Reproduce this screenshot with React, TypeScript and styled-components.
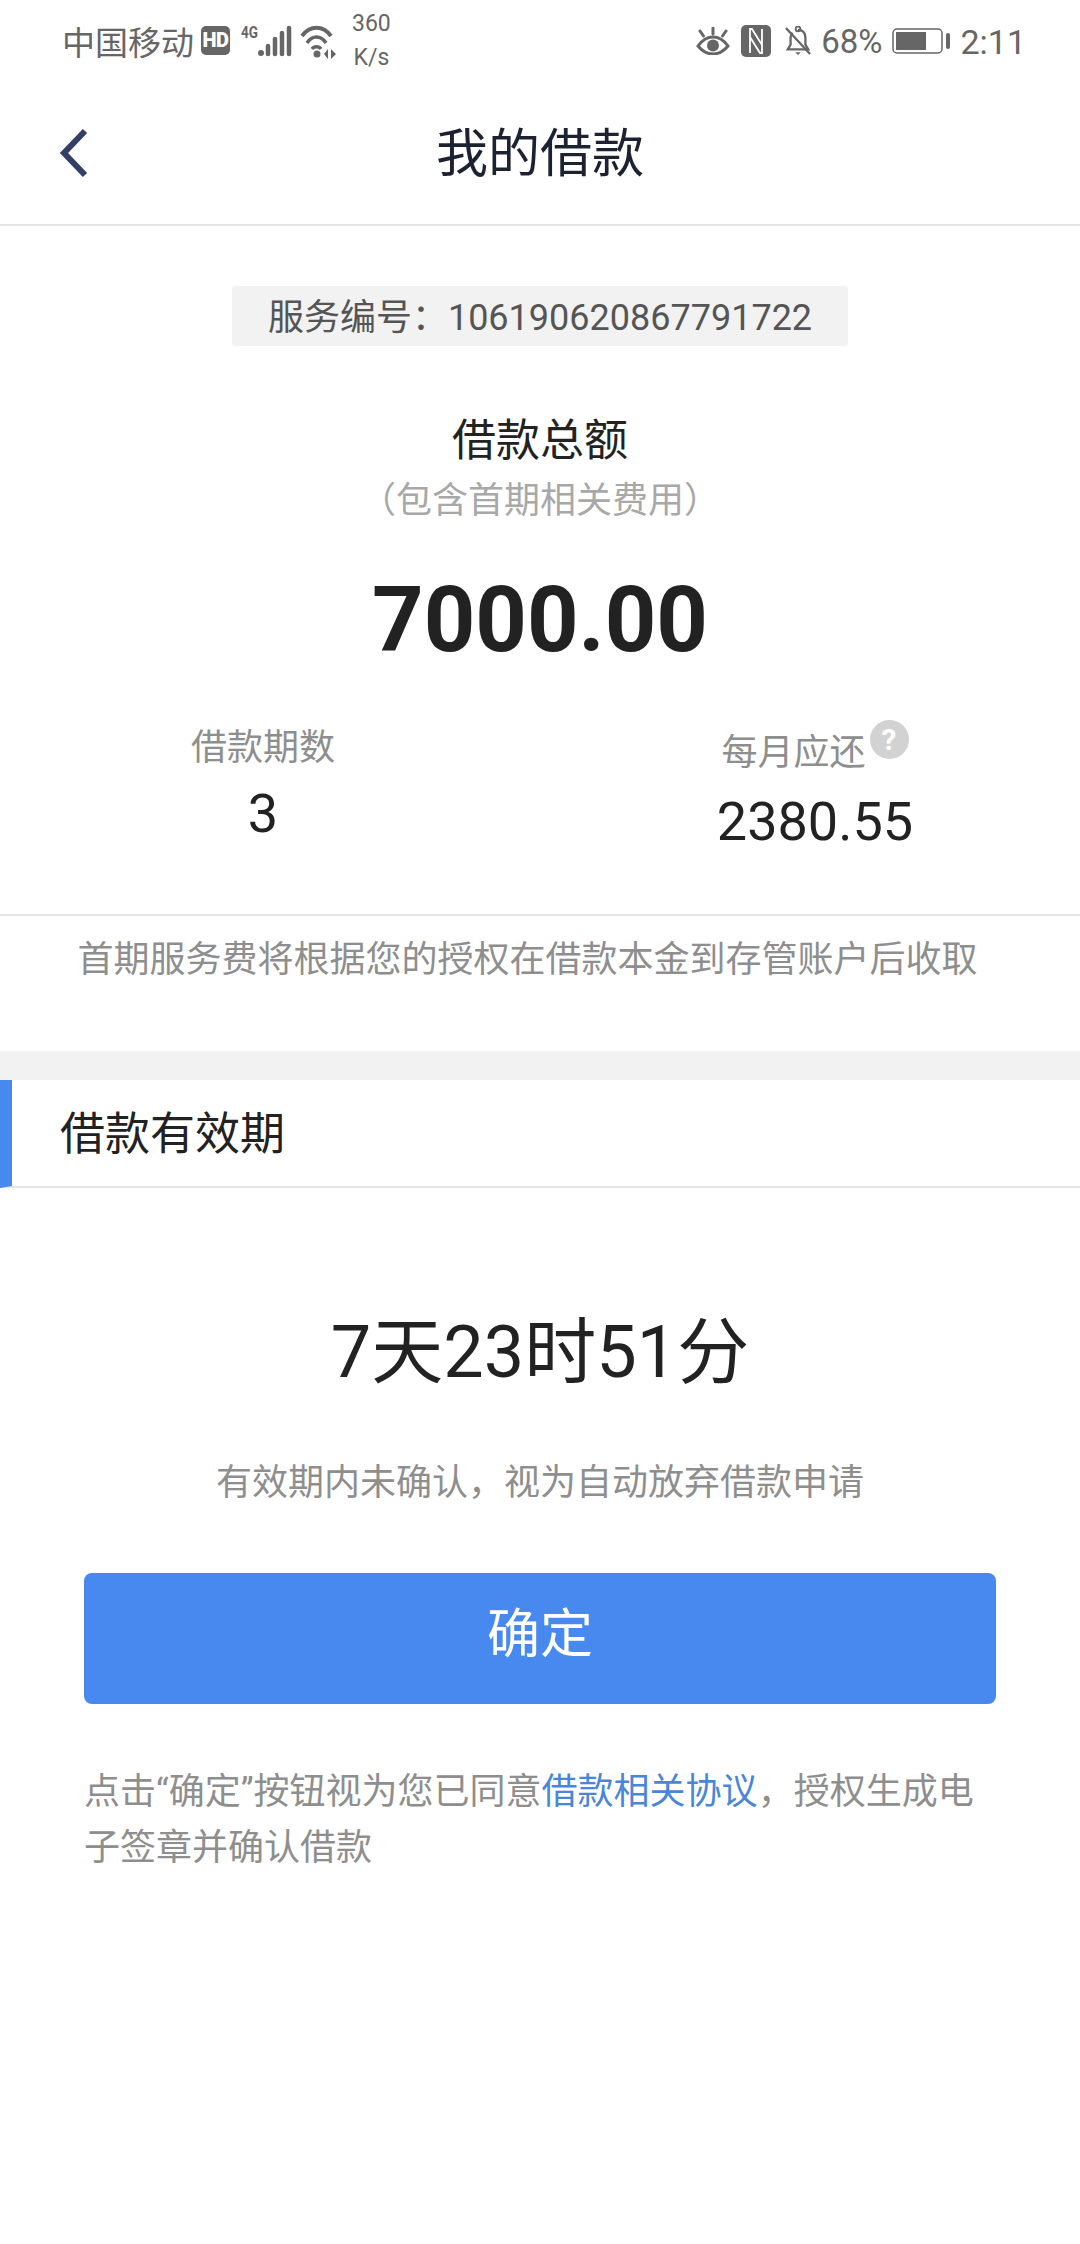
import React from 'react';
import styled, { createGlobalStyle } from 'styled-components';

const GlobalStyle = createGlobalStyle`
  html, body {
    margin: 0;
    padding: 0;
    background: #fff;
  }
  body {
    font-family: Roboto, "Noto Sans CJK SC", sans-serif;
  }
  * {
    box-sizing: border-box;
  }
`;

const palette = {
  statusGray: '#666666',
  text: '#222222',
  title: '#1c2230',
  muted: '#8e8e8e',
  line: '#e6e6e6',
  band: '#f2f2f2',
  blue: '#4889f0',
  link: '#4a86d8',
};

const Page = styled.div`
  width: 1080px;
  height: 2244px;
  background: #fff;
  overflow: hidden;
`;

const StatusBar = styled.div`
  height: 84px;
  padding: 0 54px 3px 62px;
  display: flex;
  align-items: center;
  justify-content: space-between;
  color: ${palette.statusGray};
`;

const StatusGroup = styled.div`
  display: flex;
  align-items: center;
`;

const Carrier = styled.span`
  font-size: 33px;
  line-height: 42px;
  margin-right: 7px;
  margin-top: 7px;
`;

const HdBadge = styled.span`
  width: 29px;
  height: 29px;
  border-radius: 5px;
  background: ${palette.statusGray};
  color: #fff;
  font-size: 20px;
  font-weight: 900;
  line-height: 29px;
  letter-spacing: -0.5px;
  text-align: center;
`;

const Speed = styled.div`
  font-size: 23px;
  line-height: 34px;
  text-align: center;
  margin-left: 14px;
`;

const StatusText = styled.span<{ $gap: number; $size: number }>`
  font-size: ${(p) => p.$size}px;
  line-height: 42px;
  margin-left: ${(p) => p.$gap}px;
  margin-top: 3px;
`;

const IconSlot = styled.svg<{ $gap?: number }>`
  display: block;
  margin-left: ${(p) => p.$gap ?? 0}px;
`;

const NavBar = styled.div`
  height: 142px;
  position: relative;
  display: flex;
  align-items: center;
  justify-content: center;
  border-bottom: 2px solid ${palette.line};
  padding-bottom: 10px;
`;

const BackButton = styled.svg`
  position: absolute;
  left: 58px;
  top: 44px;
`;

const NavTitle = styled.h1`
  margin: 0;
  font-size: 52px;
  font-weight: 400;
  color: ${palette.title};
`;

const Summary = styled.section`
  display: flex;
  flex-direction: column;
  align-items: center;
  padding-top: 60px;
`;

const ServiceTag = styled.div`
  width: 616px;
  height: 60px;
  padding-bottom: 4px;
  background: ${palette.band};
  border-radius: 4px;
  display: flex;
  align-items: center;
  justify-content: center;
  font-size: 36px;
  color: #555;
`;

const TotalLabel = styled.div`
  margin-top: 65px;
  font-size: 44px;
  line-height: 60px;
  color: ${palette.text};
`;

const TotalHint = styled.div`
  font-size: 36px;
  line-height: 60px;
  color: #a8a8a8;
`;

const TotalAmount = styled.div`
  margin-top: 35px;
  font-size: 90px;
  line-height: 110px;
  font-weight: 700;
  color: ${palette.text};
`;

const Stats = styled.div`
  width: 100%;
  height: 238px;
  display: grid;
  grid-template-columns: 526px 1fr;
  padding-top: 46px;
`;

const Stat = styled.div<{ $offset: number; $inset: number }>`
  display: flex;
  flex-direction: column;
  align-items: center;
  padding-top: ${(p) => p.$offset}px;
  padding-left: ${(p) => p.$inset}px;
`;

const StatLabel = styled.div`
  display: flex;
  align-items: flex-start;
  font-size: 36px;
  line-height: 50px;
  color: ${palette.muted};
`;

const HelpDot = styled.span`
  margin: -8px 0 0 4px;
  width: 39px;
  height: 39px;
  border-radius: 50%;
  background: #d2d2d2;
  color: #fff;
  font-size: 30px;
  font-weight: 700;
  line-height: 39px;
  text-align: center;
`;

const StatValue = styled.div<{ $gap: number }>`
  margin-top: ${(p) => p.$gap}px;
  font-size: 54px;
  line-height: 60px;
  color: ${palette.text};
`;

const Note = styled.div`
  border-top: 2px solid ${palette.line};
  height: 137px;
  padding: 19px 25px 0 0;
  text-align: center;
  font-size: 36px;
  line-height: 50px;
  color: ${palette.muted};
`;

const Band = styled.div`
  height: 29px;
  background: ${palette.band};
`;

const SectionHeader = styled.div`
  height: 108px;
  display: flex;
  align-items: center;
  padding: 0 0 6px 48px;
  border-left: 12px solid ${palette.blue};
  border-bottom: 2px solid ${palette.line};
  font-size: 45px;
  color: ${palette.text};
`;

const Validity = styled.section`
  display: flex;
  flex-direction: column;
  align-items: center;
  padding: 120px 84px 0;
`;

const Countdown = styled.div`
  font-size: 72px;
  line-height: 90px;
  color: ${palette.text};
`;

const ValidityHint = styled.div`
  margin-top: 60px;
  font-size: 36px;
  line-height: 50px;
  color: ${palette.muted};
`;

const ConfirmButton = styled.button`
  width: 100%;
  height: 131px;
  margin-top: 65px;
  padding: 0 0 17px;
  border: 0;
  border-radius: 8px;
  background: ${palette.blue};
  color: #fff;
  font-family: inherit;
  font-size: 53px;
`;

const Agreement = styled.p`
  align-self: stretch;
  margin: 60px 0 0;
  font-size: 36px;
  line-height: 56px;
  color: ${palette.muted};
`;

const Link = styled.a`
  color: ${palette.link};
`;

const App: React.FC = () => {
  return (
    <Page>
      <GlobalStyle />
      <StatusBar>
        <StatusGroup>
          <Carrier>中国移动</Carrier>
          <HdBadge>HD</HdBadge>
          <IconSlot $gap={11} width="51" height="36" viewBox="0 0 51 36">
            <text x="0" y="15" fontSize="17" fontWeight="700" fontFamily="Roboto" fill="#666" textLength="17" lengthAdjust="spacingAndGlyphs">4G</text>
            <circle cx="20" cy="30" r="3" fill="#666" />
            <path d="M27 23v8M34 16v15M41 10v21M48 5v26" stroke="#666" strokeWidth="4.500" strokeLinecap="round" />
          </IconSlot>
          <IconSlot $gap={8} width="38" height="36" viewBox="0 0 38 36">
            <path d="M2 13C10 2 23 2 31 13" stroke="#666" strokeWidth="4" fill="none" />
            <path d="M7 20C12 12 21 12 26 20" stroke="#666" strokeWidth="3.500" fill="none" />
            <path d="M12 26c2-3 7-3 9 0" stroke="#666" strokeWidth="3.500" fill="none" />
            <circle cx="17" cy="31" r="3.500" fill="#666" />
            <path d="M28 26l-4 5 4 5zM31 26l5 5-5 5z" fill="#666" />
          </IconSlot>
          <Speed>
            360
            <br />
            K/s
          </Speed>
        </StatusGroup>
        <StatusGroup>
          <IconSlot width="34" height="28" viewBox="0 0 34 28">
            <path d="M2 19C7 12 12 10 17 10s10 2 15 9c-5 6-10 8-15 8S7 25 2 19z" stroke="#666" strokeWidth="3" fill="none" />
            <circle cx="17" cy="18.500" r="6" fill="#666" />
            <path d="M17 1v6M4 4l3.500 5M30 4l-3.500 5" stroke="#666" strokeWidth="3" strokeLinecap="round" />
          </IconSlot>
          <IconSlot $gap={11} width="30" height="32" viewBox="0 0 30 32">
            <rect width="30" height="32" rx="5" fill="#666" />
            <path d="M9 28V4h2l10 16M21 4v24h-2L9 12" stroke="#fff" strokeWidth="1.800" fill="none" />
          </IconSlot>
          <IconSlot $gap={14} width="26" height="30" viewBox="0 0 28 32">
            <path d="M14 4c5 0 8 3 8 9v7l3 5H3l3-5v-7c0-2 .5-4 2-6" stroke="#666" strokeWidth="2.500" fill="none" />
            <path d="M11 28h6l-3 3z" fill="#666" />
            <path d="M1 2l26 28" stroke="#666" strokeWidth="2.500" />
            <circle cx="14" cy="3" r="2.500" stroke="#666" strokeWidth="2" fill="none" />
          </IconSlot>
          <StatusText $gap={10} $size={33}>68%</StatusText>
          <IconSlot $gap={10} width="58" height="26" viewBox="0 0 58 26">
            <rect x="1" y="1" width="49" height="24" rx="4" stroke="#666" strokeWidth="1.500" fill="none" />
            <rect x="4" y="4" width="30" height="18" fill="#666" />
            <rect x="54" y="5" width="4" height="16" rx="2" fill="#666" />
          </IconSlot>
          <StatusText $gap={10} $size={34}>2:11</StatusText>
        </StatusGroup>
      </StatusBar>
      <NavBar>
        <BackButton width="32" height="50" viewBox="0 0 32 50">
          <path d="M27 3L6 25l21 22" stroke="#343f68" strokeWidth="6" fill="none" />
        </BackButton>
        <NavTitle>我的借款</NavTitle>
      </NavBar>
      <Summary>
        <ServiceTag>服务编号：106190620867791722</ServiceTag>
        <TotalLabel>借款总额</TotalLabel>
        <TotalHint>（包含首期相关费用）</TotalHint>
        <TotalAmount>7000.00</TotalAmount>
        <Stats>
          <Stat $offset={1} $inset={0}>
            <StatLabel>借款期数</StatLabel>
            <StatValue $gap={11}>3</StatValue>
          </Stat>
          <Stat $offset={6} $inset={24}>
            <StatLabel>
              每月应还
              <HelpDot>?</HelpDot>
            </StatLabel>
            <StatValue $gap={14}>2380.55</StatValue>
          </Stat>
        </Stats>
      </Summary>
      <Note>首期服务费将根据您的授权在借款本金到存管账户后收取</Note>
      <Band />
      <SectionHeader>借款有效期</SectionHeader>
      <Validity>
        <Countdown>7天23时51分</Countdown>
        <ValidityHint>有效期内未确认，视为自动放弃借款申请</ValidityHint>
        <ConfirmButton>确定</ConfirmButton>
        <Agreement>
          点击“确定”按钮视为您已同意<Link>借款相关协议</Link>，授权生成电子签章并确认借款
        </Agreement>
      </Validity>
    </Page>
  );
};

export default App;
